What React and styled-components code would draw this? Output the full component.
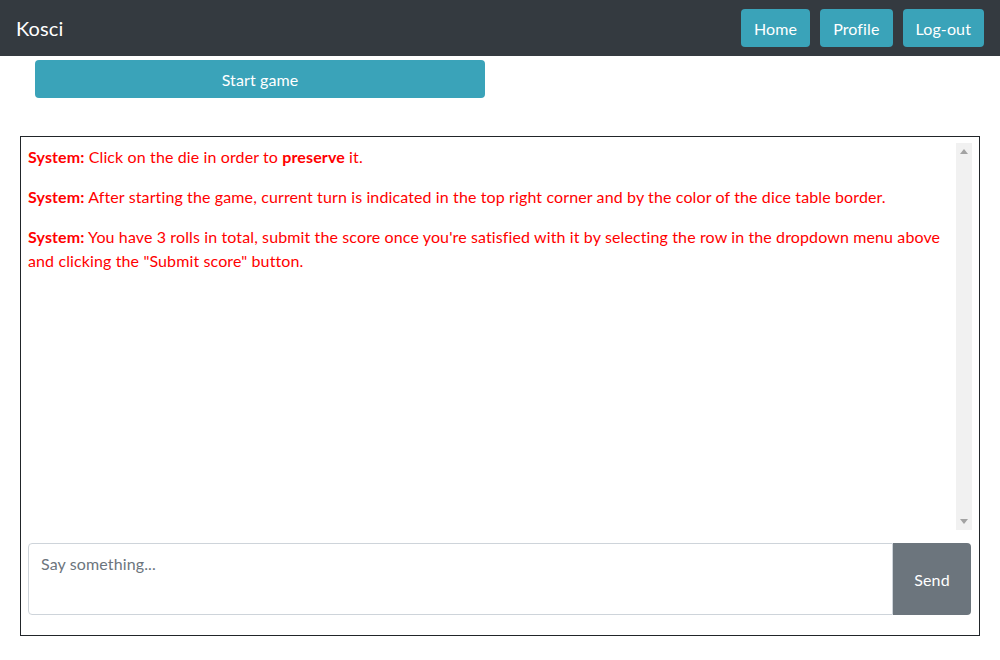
import React from "react";
import styled, { createGlobalStyle } from "styled-components";

const GlobalStyle = createGlobalStyle`
  * { box-sizing: border-box; }
  body {
    margin: 0;
    background: #fff;
    font-family: Lato, "Liberation Sans", sans-serif;
    font-size: 16px;
    letter-spacing: 0.12px;
    color: #212529;
  }
`;

const Navbar = styled.nav`
  height: 56px;
  background: #343a40;
  padding: 0 16px;
  display: flex;
  align-items: center;
  justify-content: space-between;
`;

const Brand = styled.span`
  color: #fff;
  font-size: 20px;
  letter-spacing: 0.1px;
`;

const NavButtons = styled.div`
  display: flex;
  gap: 10px;
`;

const InfoButton = styled.button`
  height: 38px;
  padding: 0 13px;
  border: none;
  border-radius: 4px;
  background: #3aa3b9;
  color: #fff;
  font-family: inherit;
  font-size: 16px;
  letter-spacing: 0.12px;
  cursor: pointer;
`;

const StartRow = styled.div`
  padding: 4px 0 0 35px;
`;

const StartButton = styled(InfoButton)`
  width: 450px;
  display: block;
`;

const ChatBox = styled.section`
  margin: 38px 20px 0 20px;
  height: 500px;
  border: 1px solid #212529;
  padding: 6px 7px 0 7px;
  display: flex;
  flex-direction: column;
`;

const MessagesPane = styled.div`
  height: 387px;
  display: flex;
`;

const MessageList = styled.div`
  flex: 1;
  overflow: hidden;
  padding-top: 2px;
`;

const ScrollTrack = styled.div`
  width: 16px;
  background: #f1f1f1;
  display: flex;
  flex-direction: column;
  justify-content: space-between;
  align-items: center;
  padding: 6px 0;
`;

const Arrow = styled.svg`
  display: block;
  width: 8px;
  height: 5px;
  fill: #a3a3a3;
`;

const Message = styled.p`
  margin: 0 0 16px 0;
  line-height: 24px;
  color: #ff0000;
`;

const Sender = styled.b`
  font-weight: 700;
`;

const InputRow = styled.div`
  display: flex;
  margin-top: 13px;
  height: 72px;
  margin-right: 1px;
`;

const TextArea = styled.textarea`
  flex: 1;
  resize: none;
  border: 1px solid #ced4da;
  border-radius: 4px 0 0 4px;
  padding: 8px 12px;
  font-family: inherit;
  font-size: 16px;
  letter-spacing: 0.12px;
  line-height: 24px;
  color: #495057;
  outline: none;
  &::placeholder {
    color: #6c757d;
  }
`;

const SendButton = styled.button`
  width: 78px;
  border: none;
  border-radius: 0 4px 4px 0;
  background: #6c757d;
  color: #fff;
  font-family: inherit;
  font-size: 16px;
  letter-spacing: 0.12px;
  cursor: pointer;
`;

export default function App() {
  return (
    <>
      <GlobalStyle />
      <Navbar>
        <Brand>Kosci</Brand>
        <NavButtons>
          <InfoButton>Home</InfoButton>
          <InfoButton>Profile</InfoButton>
          <InfoButton>Log-out</InfoButton>
        </NavButtons>
      </Navbar>
      <StartRow>
        <StartButton>Start game</StartButton>
      </StartRow>
      <ChatBox>
        <MessagesPane>
          <MessageList>
            <Message>
              <Sender>System:</Sender> Click on the die in order to <b>preserve</b> it.
            </Message>
            <Message>
              <Sender>System:</Sender> After starting the game, current turn is indicated in the top right corner and by the color of the dice table border.
            </Message>
            <Message>
              <Sender>System:</Sender> You have 3 rolls in total, submit the score once you're satisfied with it by selecting the row in the dropdown menu above and clicking the "Submit score" button.
            </Message>
          </MessageList>
          <ScrollTrack>
            <Arrow viewBox="0 0 8 5"><polygon points="4,0 8,5 0,5" /></Arrow>
            <Arrow viewBox="0 0 8 5"><polygon points="0,0 8,0 4,5" /></Arrow>
          </ScrollTrack>
        </MessagesPane>
        <InputRow>
          <TextArea placeholder="Say something..." />
          <SendButton>Send</SendButton>
        </InputRow>
      </ChatBox>
    </>
  );
}
